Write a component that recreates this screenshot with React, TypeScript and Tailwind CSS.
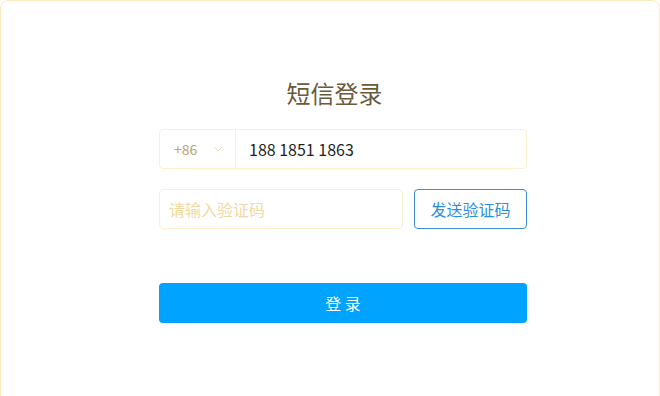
export default function App() {
  return (
    <div
      className="w-[660px] h-[396px] overflow-hidden bg-white"
      style={{ fontFamily: '"Noto Sans CJK SC", "Noto Sans", sans-serif' }}
    >
      <div className="h-[420px] border border-[#fcebbf] rounded-lg">
        <div className="w-[368px] ml-[158px] pt-[76px] flex flex-col">
          <h1 className="text-[24px] leading-[32px] text-center pr-[17px] text-[#6b5b3a] font-normal">
            短信登录
          </h1>

          <div className="mt-[20px] h-[40px] flex items-center border border-[#fdf0cc] rounded">
            <div className="w-[76px] h-full flex items-center justify-between pl-[14px] pr-[12px] border-r border-[#fdf0cc]">
              <span className="text-[14px] text-[#b9a27c]">+86</span>
              <svg width="10" height="6" viewBox="0 0 10 6" fill="none">
                <path d="M1 1l4 4 4-4" stroke="#f3d9a6" strokeWidth="1" />
              </svg>
            </div>
            <span className="pl-[13px] text-[16px] text-[#1f1f1f]">188 1851 1863</span>
          </div>

          <div className="mt-[20px] flex gap-[11px]">
            <div className="flex-1 h-[40px] flex items-center border border-[#fdf0cc] rounded px-[9px]">
              <span className="text-[16px] text-[#f0d9a2]">请输入验证码</span>
            </div>
            <button className="w-[113px] h-[40px] border border-[#3b8ed2] rounded text-[16px] text-[#2b90dc] bg-white">
              发送验证码
            </button>
          </div>

          <button className="mt-[54px] h-[40px] rounded bg-[#00a3ff] text-white text-[16px]">
            登 录
          </button>
        </div>
      </div>
    </div>
  );
}
